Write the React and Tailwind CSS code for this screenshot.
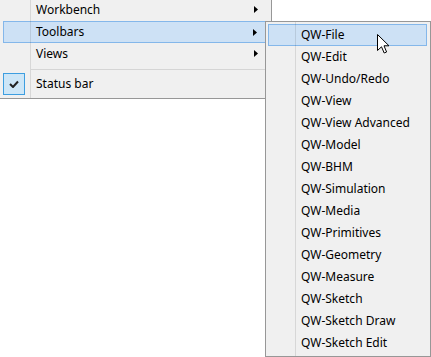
import React from 'react';

const toolbars = [
    "QW-File", "QW-Edit", "QW-Undo/Redo", "QW-View", "QW-View Advanced",
    "QW-Model", "QW-BHM", "QW-Simulation", "QW-Media", "QW-Primitives",
    "QW-Geometry", "QW-Measure", "QW-Sketch", "QW-Sketch Draw", "QW-Sketch Edit"
];

const Arrow = () => (
    <svg width="4" height="7" viewBox="0 0 4 7" className="absolute right-[10px] top-[7px]">
        <path d="M0 0 L4 3.5 L0 7 Z" fill="#000" />
    </svg>
);

const MenuRow = ({ label, active, submenu, checked }) => (
    <div className={`relative h-[22px] flex items-center ${active ? 'bg-[#cde1f5] border border-[#84b7ea]' : ''}`}>
        {checked && (
            <div className="absolute left-0 top-0 w-[22px] h-[22px] bg-[#cde6f7] border border-[#3d9ee0] flex items-center justify-center">
                <svg width="10" height="8" viewBox="0 0 10 8">
                    <path d="M1 4 L4 7 L9 1.5" stroke="#222" strokeWidth="2" fill="none" />
                </svg>
            </div>
        )}
        <span className={`${active ? 'pl-[32px]' : 'pl-[33px]'} text-black leading-none`}>{label}</span>
        {submenu && <Arrow />}
    </div>
);

const App = () => {
    return (
        <div className="relative w-[431px] h-[357px] bg-white overflow-hidden text-[12px] font-['Segoe_UI','Noto_Sans',sans-serif]">
            {/* main popup */}
            <div className="absolute left-[-1px] top-[-5px] w-[273px] bg-[#f0f0f0] border border-[#979797] p-[3px] flex flex-col">
                <div className="absolute left-[30px] top-0 bottom-0 w-px bg-[#000000]/10 z-10" />
                <MenuRow label="Workbench" submenu />
                <MenuRow label="Toolbars" submenu active />
                <MenuRow label="Views" submenu />
                <div className="h-[8px] flex items-center pl-[28px]">
                    <div className="h-px w-full bg-[#d5d5d5]" />
                </div>
                <MenuRow label="Status bar" checked />
            </div>

            {/* toolbars submenu */}
            <div className="absolute left-[265px] top-[21px] w-[166px] bg-[#f0f0f0] border border-[#979797] pt-[2px] pb-[2px] pl-[2px] pr-[3px] flex flex-col">
                <div className="absolute left-[29px] top-0 bottom-0 w-px bg-[#000000]/10 z-10" />
                {toolbars.map((t, i) => (
                    <MenuRow key={t} label={t} active={i === 0} />
                ))}
            </div>

            {/* mouse cursor */}
            <svg width="13" height="20" viewBox="0 0 13 20" className="absolute left-[377px] top-[34px] z-20">
                <path d="M0.5 0.5 L0.5 16.5 L4.5 12.8 L7.2 19 L9.6 18 L7 11.8 L12 11.8 Z" fill="#fff" stroke="#000" strokeWidth="1" strokeLinejoin="miter" />
            </svg>
        </div>
    );
};

export default App;
